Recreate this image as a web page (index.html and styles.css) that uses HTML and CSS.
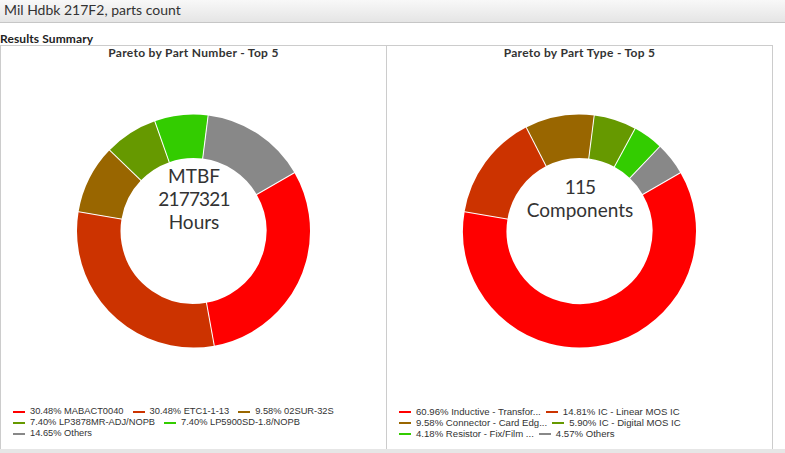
FILE: index.html
```html
<!DOCTYPE html>
<html>
<head>
<meta charset="utf-8">
<title>Mil Hdbk 217F2, parts count</title>
<link rel="stylesheet" href="styles.css">
</head>
<body>
<header class="topbar">Mil Hdbk 217F2, parts count</header>
<div class="section-label">Results Summary</div>
<div class="panels">
  <section class="panel">
    <h2 class="panel-title">Pareto by Part Number - Top 5</h2>
    <svg class="donut" width="385" height="347" viewBox="0 0 385 347">
      <g transform="translate(192.5 172)" fill="none" stroke-width="43.5">
        <circle r="94.75" stroke="#ff0000" stroke-dasharray="181.46 600" transform="rotate(-30)"/>
        <circle r="94.75" stroke="#cc3300" stroke-dasharray="181.46 600" transform="rotate(79.73)"/>
        <circle r="94.75" stroke="#996600" stroke-dasharray="57.03 600" transform="rotate(189.46)"/>
        <circle r="94.75" stroke="#669900" stroke-dasharray="44.05 600" transform="rotate(223.94)"/>
        <circle r="94.75" stroke="#33cc00" stroke-dasharray="44.05 600" transform="rotate(250.58)"/>
        <circle r="94.75" stroke="#888888" stroke-dasharray="87.22 600" transform="rotate(277.22)"/>
        <g stroke="#ffffff" stroke-width="1">
          <line x1="0" y1="-72" x2="0" y2="-118" transform="rotate(60)"/>
          <line x1="0" y1="-72" x2="0" y2="-118" transform="rotate(169.73)"/>
          <line x1="0" y1="-72" x2="0" y2="-118" transform="rotate(279.46)"/>
          <line x1="0" y1="-72" x2="0" y2="-118" transform="rotate(313.94)"/>
          <line x1="0" y1="-72" x2="0" y2="-118" transform="rotate(340.58)"/>
          <line x1="0" y1="-72" x2="0" y2="-118" transform="rotate(7.22)"/>
        </g>
      </g>
      <text class="center-label" x="193" y="124">MTBF</text>
      <text class="center-label digits" x="193" y="147">2177321</text>
      <text class="center-label" x="193" y="170">Hours</text>
    </svg>
    <ul class="legend legend-wide">
      <li class="legend-item"><span class="swatch c-red"></span>30.48% MABACT0040</li>
      <li class="legend-item"><span class="swatch c-orange"></span>30.48% ETC1-1-13</li>
      <li class="legend-item"><span class="swatch c-brown"></span>9.58% 02SUR-32S</li>
      <li class="legend-item"><span class="swatch c-olive"></span>7.40% LP3878MR-ADJ/NOPB</li>
      <li class="legend-item"><span class="swatch c-green"></span>7.40% LP5900SD-1.8/NOPB</li>
      <li class="legend-item"><span class="swatch c-gray"></span>14.65% Others</li>
    </ul>
  </section>
  <section class="panel">
    <h2 class="panel-title">Pareto by Part Type - Top 5</h2>
    <svg class="donut" width="385" height="347" viewBox="0 0 385 347">
      <g transform="translate(192.5 172)" fill="none" stroke-width="43.5">
        <circle r="94.75" stroke="#ff0000" stroke-dasharray="362.91 600" transform="rotate(-30)"/>
        <circle r="94.75" stroke="#cc3300" stroke-dasharray="88.17 600" transform="rotate(189.46)"/>
        <circle r="94.75" stroke="#996600" stroke-dasharray="57.03 600" transform="rotate(242.77)"/>
        <circle r="94.75" stroke="#669900" stroke-dasharray="35.12 600" transform="rotate(277.26)"/>
        <circle r="94.75" stroke="#33cc00" stroke-dasharray="24.88 600" transform="rotate(298.5)"/>
        <circle r="94.75" stroke="#888888" stroke-dasharray="27.21 600" transform="rotate(313.55)"/>
        <g stroke="#ffffff" stroke-width="1">
          <line x1="0" y1="-72" x2="0" y2="-118" transform="rotate(60)"/>
          <line x1="0" y1="-72" x2="0" y2="-118" transform="rotate(279.46)"/>
          <line x1="0" y1="-72" x2="0" y2="-118" transform="rotate(332.77)"/>
          <line x1="0" y1="-72" x2="0" y2="-118" transform="rotate(7.26)"/>
          <line x1="0" y1="-72" x2="0" y2="-118" transform="rotate(28.5)"/>
          <line x1="0" y1="-72" x2="0" y2="-118" transform="rotate(43.55)"/>
        </g>
      </g>
      <text class="center-label digits" x="193" y="135">115</text>
      <text class="center-label" x="193" y="158">Components</text>
    </svg>
    <ul class="legend legend-tight">
      <li class="legend-item"><span class="swatch c-red"></span>60.96% Inductive - Transfor...</li>
      <li class="legend-item"><span class="swatch c-orange"></span>14.81% IC - Linear MOS IC</li>
      <li class="legend-item"><span class="swatch c-brown"></span>9.58% Connector - Card Edg...</li>
      <li class="legend-item"><span class="swatch c-olive"></span>5.90% IC - Digital MOS IC</li>
      <li class="legend-item"><span class="swatch c-green"></span>4.18% Resistor - Fix/Film ...</li>
      <li class="legend-item"><span class="swatch c-gray"></span>4.57% Others</li>
    </ul>
  </section>
</div>
<div class="footer-strip"></div>
</body>
</html>
```

FILE: styles.css
```css
html, body {
  margin: 0;
  padding: 0;
  background: #ffffff;
}

body {
  width: 785px;
  height: 453px;
  overflow: hidden;
  font-family: Lato, "Open Sans", sans-serif;
  color: #333333;
}

.topbar {
  height: 22px;
  line-height: 19px;
  padding-left: 4px;
  font-size: 14px;
  color: #333333;
  background: linear-gradient(#f8f8f8, #e5e5e5);
  border-bottom: 1px solid #c6c6c6;
}

.section-label {
  margin-top: 10px;
  height: 12px;
  line-height: 12px;
  font-size: 12px;
  letter-spacing: 0.1px;
  font-weight: bold;
  color: #222222;
}

.panels {
  display: grid;
  grid-template-columns: 385px 385px;
  column-gap: 1px;
  width: 771px;
  background: #cccccc;
  border: 1px solid #cccccc;
  border-bottom: none;
}

.panel {
  display: flex;
  flex-direction: column;
  height: 403px;
  background: #ffffff;
}

.panel-title {
  margin: 0;
  padding-top: 1px;
  height: 12px;
  line-height: 12px;
  font-size: 12px;
  letter-spacing: 0.3px;
  font-weight: bold;
  text-align: center;
  color: #333333;
}

.donut {
  display: block;
  width: 385px;
  height: 347px;
}

.center-label {
  font-family: Lato, "Open Sans", sans-serif;
  font-size: 19px;
  fill: #333333;
  text-anchor: middle;
}

.digits {
  letter-spacing: -0.8px;
}

.legend {
  list-style: none;
  margin: 0;
  padding: 0 12px 0 12px;
  display: flex;
  flex-wrap: wrap;
  font-family: "Liberation Sans", Arial, sans-serif;
  font-size: 9.6px;
  line-height: 11px;
  color: #333333;
}

.legend-item {
  display: flex;
  align-items: center;
  white-space: nowrap;
}

.legend-wide {
  font-size: 9.3px;
}

.legend-wide .legend-item {
  margin-right: 9px;
}

.legend-tight .legend-item {
  margin-right: 5px;
}

.swatch {
  display: inline-block;
  width: 12px;
  height: 2px;
  margin-right: 5px;
}

.c-red { background: #ff0000; }
.c-orange { background: #cc3300; }
.c-brown { background: #996600; }
.c-olive { background: #669900; }
.c-green { background: #33cc00; }
.c-gray { background: #888888; }

.footer-strip {
  height: 10px;
  background: #e6e6e6;
}
```
